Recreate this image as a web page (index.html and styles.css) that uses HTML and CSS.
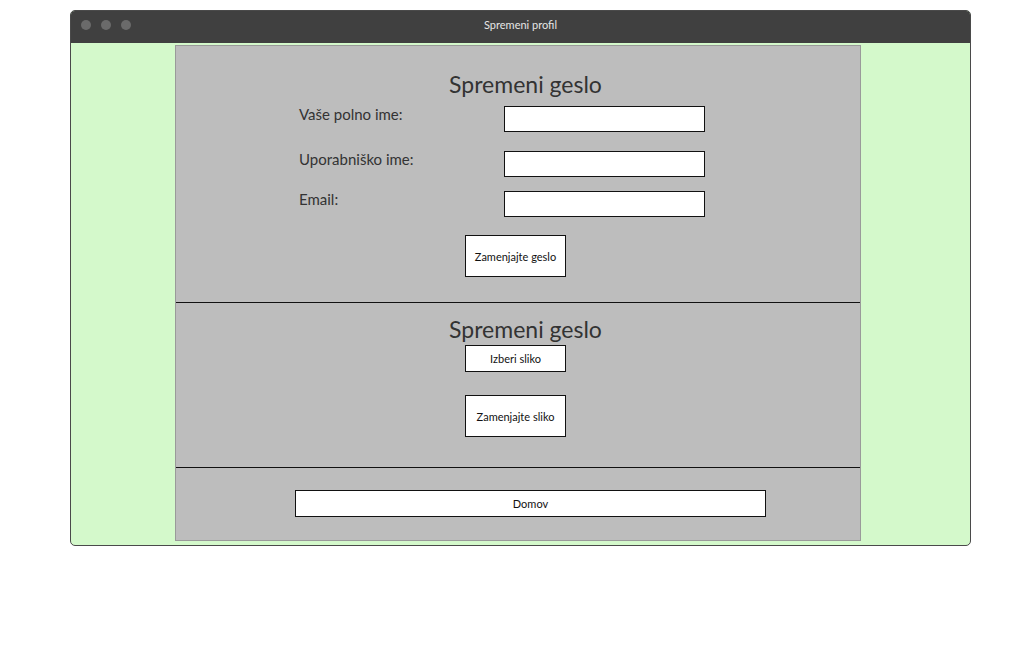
FILE: index.html
```html
<!DOCTYPE html>
<html>
<head>
<meta charset="utf-8">
<link rel="stylesheet" href="styles.css">
</head>
<body>
<div class="window">
  <div class="titlebar">
    <div class="dots"><span class="dot"></span><span class="dot"></span><span class="dot"></span></div>
    <div class="title">Spremeni profil</div>
  </div>
  <div class="content">
    <div class="panel">
      <section class="sec sec-profile">
        <h2 class="heading">Spremeni geslo</h2>
        <div class="row row1"><label class="label">Vaše polno ime:</label><div class="input"></div></div>
        <div class="row row2"><label class="label">Uporabniško ime:</label><div class="input"></div></div>
        <div class="row row3"><label class="label">Email:</label><div class="input"></div></div>
        <div class="btn btn-tall btn-geslo">Zamenjajte geslo</div>
      </section>
      <section class="sec sec-pic">
        <h2 class="heading">Spremeni geslo</h2>
        <div class="btn btn-short btn-izberi">Izberi sliko</div>
        <div class="btn btn-tall btn-slika">Zamenjajte sliko</div>
      </section>
      <section class="sec sec-home">
        <div class="btn btn-short btn-domov">Domov</div>
      </section>
    </div>
  </div>
</div>
</body>
</html>
```
FILE: styles.css
```css
* { box-sizing: border-box; }
html, body { margin: 0; padding: 0; background: #ffffff; }
body { font-family: Lato, "Liberation Sans", sans-serif; color: #333333; }

.window {
  margin: 10px 0 0 70px;
  width: 901px;
  height: 536px;
  border: 1px solid #4a4a4a;
  border-radius: 5px;
  overflow: hidden;
  background: #d4f9cb;
  display: flex;
  flex-direction: column;
}
.titlebar {
  height: 32px;
  background: #404040;
  position: relative;
  display: flex;
  align-items: center;
  justify-content: center;
  padding-bottom: 4px;
  flex: none;
}
.dots { position: absolute; left: 10px; top: 9px; display: flex; gap: 10px; }
.dot { width: 10px; height: 10px; border-radius: 50%; background: #6a6a6a; display: block; }
.title { color: #e6e6e6; font-size: 11px; line-height: 14px; }

.content { flex: 1; padding: 2px 0 4px 104px; display: flex; }
.panel {
  width: 686px;
  height: 496px;
  background: #bdbdbd;
  border: 1px solid #9a9a9a;
  display: flex;
  flex-direction: column;
}
.sec { display: flex; flex-direction: column; align-items: flex-start; }
.sec-profile { height: 257px; border-bottom: 1px solid #111; padding-top: 24px; }
.sec-pic { height: 165px; border-bottom: 1px solid #111; padding-top: 12px; }
.sec-home { flex: 1; padding-top: 22px; }

.heading {
  margin: 0;
  align-self: stretch;
  text-align: center;
  padding-left: 15px;
  font-size: 23px;
  font-weight: normal;
  line-height: 28px;
  color: #333;
}
.row { display: flex; align-items: flex-start; padding-left: 123px; }
.row1 { margin-top: 8px; }
.row2 { margin-top: 19px; }
.row3 { margin-top: 14px; }
.label { width: 205px; font-size: 15px; line-height: 16px; color: #333; }
.input { width: 201px; height: 26px; background: #fff; border: 1px solid #111; }

.btn {
  background: #fff;
  border: 1px solid #111;
  font-size: 11px;
  color: #111;
  display: flex;
  align-items: center;
  justify-content: center;
}
.btn-tall { width: 101px; height: 42px; }
.btn-short { width: 101px; height: 27px; }
.btn-geslo { margin: 18px 0 0 289px; }
.btn-izberi { margin: 2px 0 0 289px; }
.btn-slika { margin: 23px 0 0 289px; }
.btn-domov { width: 471px; margin-left: 119px; }
```
